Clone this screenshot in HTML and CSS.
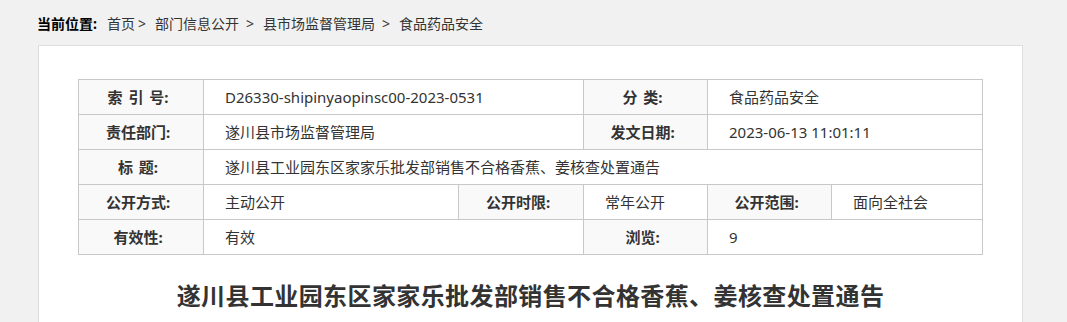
FILE: index.html
```html
<!DOCTYPE html>
<html>
  <head>
    <title>食品药品安全</title>
    <meta charset="utf-8">
    <link rel="stylesheet" href="styles.css">
  </head>
  <body>
    <div class="crumbs">
      <span class="here">当前位置:</span><a href="#">首页</a><span class="sep first">&gt;</span><a href="#">部门信息公开</a><span class="sep">&gt;</span><a href="#">县市场监督管理局</a><span class="sep">&gt;</span><a href="#">食品药品安全</a>
    </div>

    <div class="panel">
      <table class="info">
        <colgroup>
          <col style="width:125px">
          <col style="width:255px">
          <col style="width:125px">
          <col style="width:124px">
          <col style="width:124px">
          <col>
        </colgroup>
        <tr>
          <th>索 引 号:</th>
          <td colspan="2">D26330-shipinyaopinsc00-2023-0531</td>
          <th>分 类:</th>
          <td colspan="2">食品药品安全</td>
        </tr>
        <tr>
          <th>责任部门:</th>
          <td colspan="2">遂川县市场监督管理局</td>
          <th>发文日期:</th>
          <td colspan="2">2023-06-13 11:01:11</td>
        </tr>
        <tr>
          <th>标 题:</th>
          <td colspan="5">遂川县工业园东区家家乐批发部销售不合格香蕉、姜核查处置通告</td>
        </tr>
        <tr>
          <th>公开方式:</th>
          <td>主动公开</td>
          <th>公开时限:</th>
          <td>常年公开</td>
          <th>公开范围:</th>
          <td>面向全社会</td>
        </tr>
        <tr>
          <th>有效性:</th>
          <td colspan="2">有效</td>
          <th>浏览:</th>
          <td colspan="2">9</td>
        </tr>
      </table>

      <h1 class="title">遂川县工业园东区家家乐批发部销售不合格香蕉、姜核查处置通告</h1>
    </div>
  </body>
</html>
```

FILE: styles.css
```css
body {
  margin: 0;
  background-color: #f1f1f1;
  font-family: "Microsoft YaHei", "Noto Sans", "Noto Sans CJK SC", sans-serif;
  font-size: 14px;
  color: #333;
}
a {
  color: #333;
  text-decoration: none;
}
.crumbs {
  height: 45px;
  line-height: 48px;
  padding-left: 37px;
  box-sizing: border-box;
}
.crumbs .here {
  color: #000;
  font-weight: bold;
  margin-right: 10px;
}
.crumbs .sep {
  margin: 0 9px 0 7px;
}
.crumbs .sep.first {
  margin-left: 3px;
}
.panel {
  margin-left: 38px;
  width: 985px;
  box-sizing: border-box;
  background-color: #fff;
  border: 1px solid #dedede;
  padding: 33px 39px 40px 39px;
}
.info {
  width: 905px;
  border-collapse: collapse;
  table-layout: fixed;
  font-size: 15px;
}
.info th,
.info td {
  border: 1px solid #c8c8c8;
  height: 34px;
  padding: 0;
  white-space: nowrap;
  line-height: 20px;
}
.info th {
  background-color: #f9f9f9;
  font-weight: bold;
  color: #333;
  text-align: center;
  word-spacing: 2px;
  padding-right: 6px;
}
.info td {
  text-align: left;
  padding-left: 21px;
}
.title {
  margin: 24px 0 0 0;
  text-align: center;
  font-family: "SimSun", "Noto Sans CJK SC", serif;
  font-size: 24px;
  font-weight: bold;
  letter-spacing: 0.4px;
  color: #333;
  line-height: 32px;
}
```
